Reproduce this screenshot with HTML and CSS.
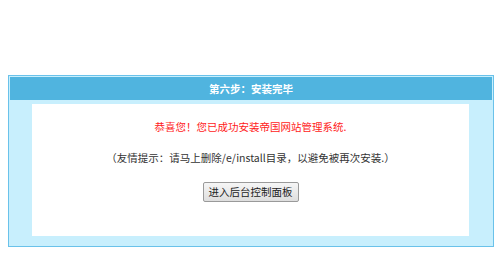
FILE: index.html
```html
<!DOCTYPE html>
<html lang="zh-CN">
<head>
<meta charset="utf-8">
<title>安装完毕</title>
<link rel="stylesheet" href="styles.css">
</head>
<body>
<div class="box">
  <div class="head">第六步：安装完毕</div>
  <div class="body">
    <div class="panel">
      <p class="ok">恭喜您！您已成功安装帝国网站管理系统.</p>
      <p class="tip">（友情提示：请马上删除/e/install目录，以避免被再次安装.）</p>
      <div class="actions"><button class="btn" type="button">进入后台控制面板</button></div>
    </div>
  </div>
</div>
</body>
</html>
```
FILE: styles.css
```css
html, body {
  margin: 0;
  padding: 0;
  background: #fff;
}
body {
  font-family: "Noto Sans CJK SC", "Noto Sans", sans-serif;
  font-size: 10.5px;
  color: #333;
}
.box {
  margin: 75px 0 0 8px;
  width: 482px;
  border: 1px solid #6ac2ea;
  padding: 1px;
  background: #c8effd;
}
.head {
  height: 23px;
  line-height: 23px;
  background: #50b4df;
  color: #fff;
  font-weight: bold;
  text-align: center;
}
.body {
  padding: 4px 23px 9px 22px;
}
.panel {
  background: #fff;
  height: 132px;
  padding-top: 15px;
  box-sizing: border-box;
  text-align: center;
}
.panel p {
  margin: 0;
  line-height: 16px;
}
.ok {
  color: #ff1a1a;
}
.tip {
  margin-top: 15px !important;
  color: #333;
}
.actions {
  margin-top: 16px;
}
.btn {
  font-family: "Noto Sans CJK SC", "Noto Sans", sans-serif;
  font-size: 10.5px;
  color: #222;
  height: 20px;
  padding: 0 5px;
  border: 1px solid #9a9a9a;
  border-radius: 2px;
  background: linear-gradient(#f6f6f6, #dedede);
  line-height: 18px;
}
```
